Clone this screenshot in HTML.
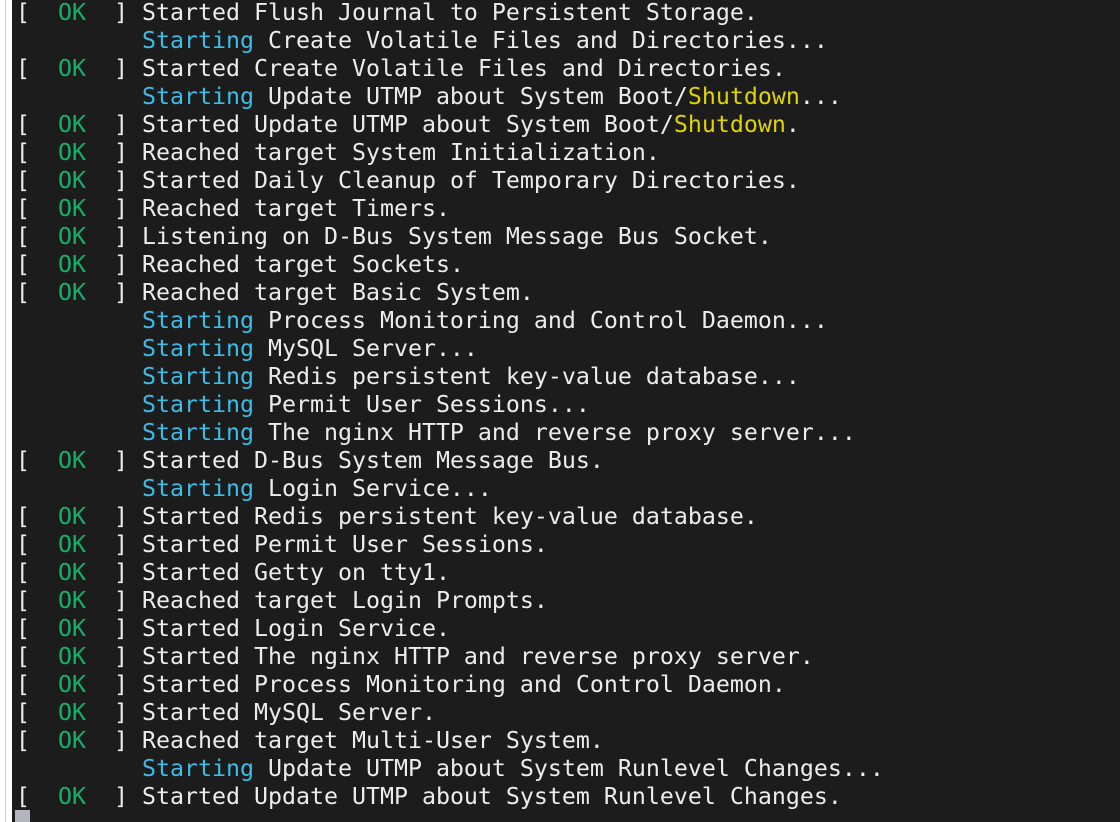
<!DOCTYPE html>
<html><head><meta charset="utf-8"><style>
html,body{margin:0;padding:0;width:1120px;height:822px;overflow:hidden;background:#fff}
.side{position:absolute;left:5px;top:0;width:1px;height:822px;background:#d0d0d0}
.term{position:absolute;left:12px;top:0;width:1108px;height:822px;background:#1c1c1c}
pre{position:absolute;left:16px;top:-1px;margin:0;font-family:"DejaVu Sans Mono","Liberation Mono",monospace;font-size:23.25px;line-height:28px;color:#ececec}
.g{color:#16b068}.c{color:#3cbde6}.y{color:#e0d400}
.cur{position:absolute;left:15px;top:810px;width:15px;height:12px;background:#b4b4bc}
</style></head><body>
<div class="side"></div><div class="term"></div>
<pre>[  <span class="g">OK</span>  ] Started Flush Journal to Persistent Storage.
         <span class="c">Starting</span> Create Volatile Files and Directories...
[  <span class="g">OK</span>  ] Started Create Volatile Files and Directories.
         <span class="c">Starting</span> Update UTMP about System Boot/<span class="y">Shutdown</span>...
[  <span class="g">OK</span>  ] Started Update UTMP about System Boot/<span class="y">Shutdown</span>.
[  <span class="g">OK</span>  ] Reached target System Initialization.
[  <span class="g">OK</span>  ] Started Daily Cleanup of Temporary Directories.
[  <span class="g">OK</span>  ] Reached target Timers.
[  <span class="g">OK</span>  ] Listening on D-Bus System Message Bus Socket.
[  <span class="g">OK</span>  ] Reached target Sockets.
[  <span class="g">OK</span>  ] Reached target Basic System.
         <span class="c">Starting</span> Process Monitoring and Control Daemon...
         <span class="c">Starting</span> MySQL Server...
         <span class="c">Starting</span> Redis persistent key-value database...
         <span class="c">Starting</span> Permit User Sessions...
         <span class="c">Starting</span> The nginx HTTP and reverse proxy server...
[  <span class="g">OK</span>  ] Started D-Bus System Message Bus.
         <span class="c">Starting</span> Login Service...
[  <span class="g">OK</span>  ] Started Redis persistent key-value database.
[  <span class="g">OK</span>  ] Started Permit User Sessions.
[  <span class="g">OK</span>  ] Started Getty on tty1.
[  <span class="g">OK</span>  ] Reached target Login Prompts.
[  <span class="g">OK</span>  ] Started Login Service.
[  <span class="g">OK</span>  ] Started The nginx HTTP and reverse proxy server.
[  <span class="g">OK</span>  ] Started Process Monitoring and Control Daemon.
[  <span class="g">OK</span>  ] Started MySQL Server.
[  <span class="g">OK</span>  ] Reached target Multi-User System.
         <span class="c">Starting</span> Update UTMP about System Runlevel Changes...
[  <span class="g">OK</span>  ] Started Update UTMP about System Runlevel Changes.</pre>
<div class="cur"></div>
</body></html>
